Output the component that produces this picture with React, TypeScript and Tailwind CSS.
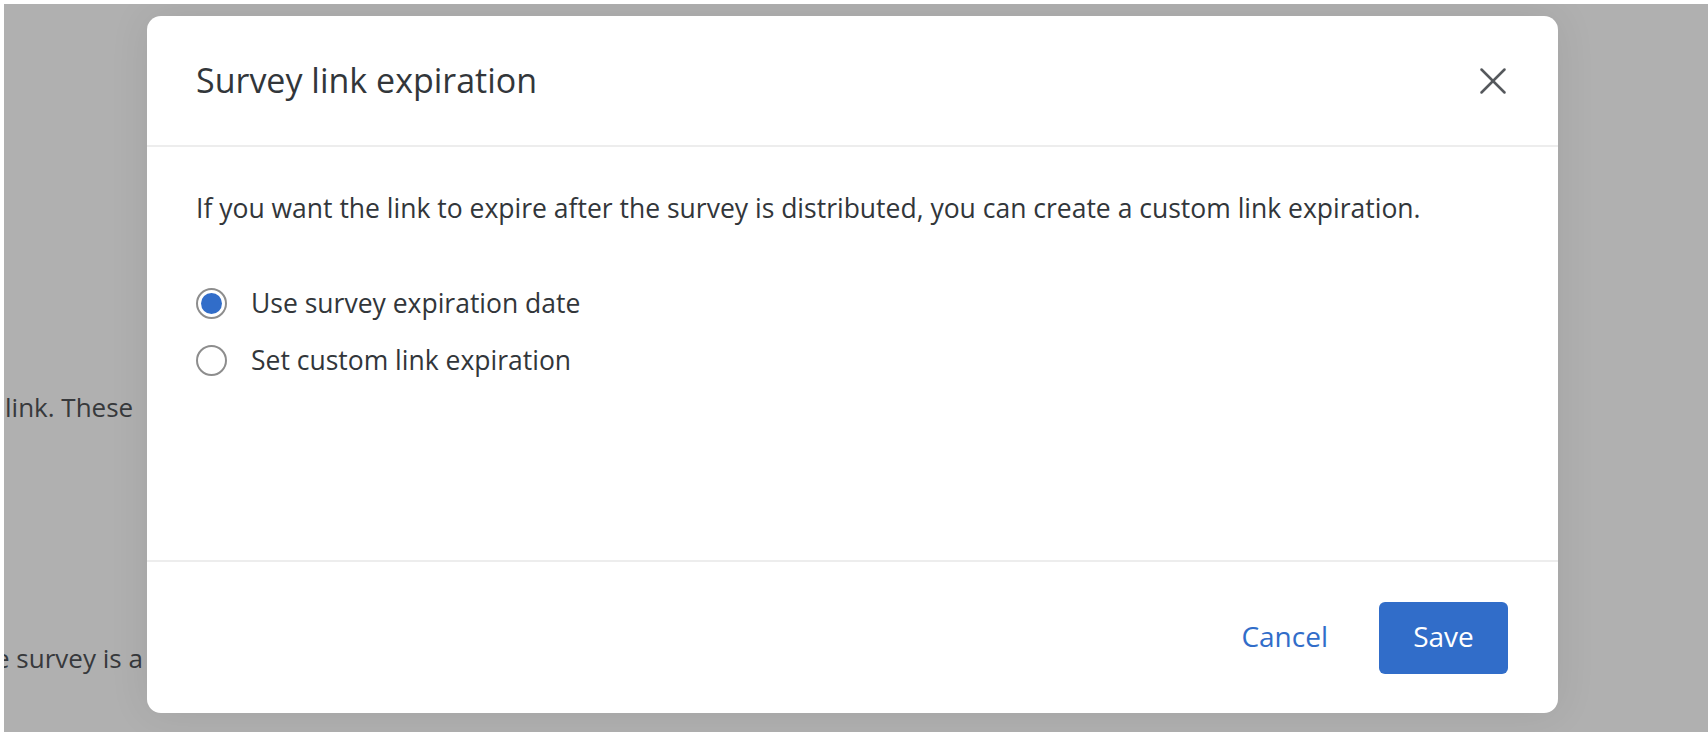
import { X } from "lucide-react";

const font = { fontFamily: '"Open Sans", "Noto Sans", sans-serif' };

const Radio = ({ checked, label }: { checked?: boolean; label: string }) => (
  <label className="flex h-[57px] items-center gap-[24px]">
    <span className="flex h-[31px] w-[31px] items-center justify-center rounded-full border-2 border-[#8d8d8d] bg-white">
      {checked && <span className="h-[21px] w-[21px] rounded-full bg-[#316dc9]" />}
    </span>
    <span className="text-[26.5px] text-[#32363a]">{label}</span>
  </label>
);

export default function App() {
  return (
    <div className="h-[732px] w-full bg-white pl-[4px] pt-[4px]" style={font}>
      <div className="relative h-full overflow-hidden bg-[#b0b0b0] text-[26px] text-[#37393c]">
        {/* page behind the dialog */}
        <div className="pt-[384px]">
          <p className="ml-[1px] whitespace-nowrap">link. These</p>
          <p className="ml-[-9px] mt-[212px] whitespace-nowrap">e survey is a</p>
        </div>

        {/* dialog */}
        <div className="absolute left-[143px] top-[12px] flex h-[697px] w-[1411px] flex-col rounded-[14px] bg-white shadow-[0_0_40px_rgba(0,0,0,0.08)]">
          <div className="flex h-[131px] items-center justify-between border-b-2 border-[#ededed] pl-[49px] pr-[42px]">
            <h1 className="text-[34px] text-[#32363a]">Survey link expiration</h1>
            <button className="text-[#55585c]">
              <X className="h-[46px] w-[46px]" strokeWidth={1.3} />
            </button>
          </div>

          <div className="flex-1 px-[49px] pt-[45px]">
            <p className="text-[26.5px] leading-[32px] text-[#32363a]">
              If you want the link to expire after the survey is distributed, you can create a custom link expiration.
            </p>
            <div className="mt-[51px] flex flex-col">
              <Radio checked label="Use survey expiration date" />
              <Radio label="Set custom link expiration" />
            </div>
          </div>

          <div className="flex h-[153px] items-center justify-end gap-[51px] border-t-2 border-[#ededed] pr-[50px]">
            <button className="pb-[4px] text-[28px] text-[#316dc9]">Cancel</button>
            <button className="h-[72px] w-[129px] rounded-[6px] bg-[#316dc9] pb-[3px] text-[28px] font-medium text-white">
              Save
            </button>
          </div>
        </div>
      </div>
    </div>
  );
}
